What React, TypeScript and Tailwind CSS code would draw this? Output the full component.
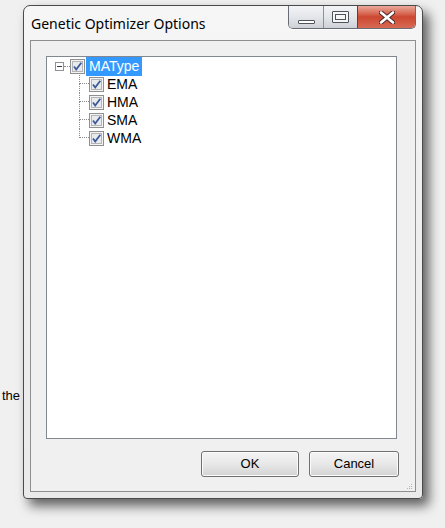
import React from 'react';

const CheckBox = () => (
  <svg width="15" height="15" viewBox="0 0 15 15" className="shrink-0">
    <rect x="0.5" y="0.5" width="14" height="14" fill="#f4f4f4" stroke="#8e8f8f" />
    <rect x="2.5" y="2.5" width="10" height="10" fill="#e9eaec" stroke="#b2b4b8" />
    <path d="M4 7.5 L6.2 10.5 L11.3 3.8" fill="none" stroke="#3c5a9a" strokeWidth="1.8" />
  </svg>
);

const Expander = () => (
  <div className="w-[9px] h-[9px] border border-[#919191] bg-white flex items-center justify-center shrink-0">
    <div className="w-[5px] h-px bg-[#333a4e]" />
  </div>
);

const TreeChild = ({ label, last }: { label: string; last: boolean }) => (
  <div className="flex h-[18px] items-center">
    <div className="w-[32px] shrink-0" />
    <div className="w-[10px] h-full flex flex-col shrink-0">
      <div className="h-[9px] border-l border-b border-dotted border-[#8a8a8a]" />
      <div className={`flex-1 ${last ? '' : 'border-l border-dotted border-[#8a8a8a]'}`} />
    </div>
    <CheckBox />
    <span className="ml-[3px] text-[14px] leading-[18px] text-black">{label}</span>
  </div>
);

const App = () => {
  const children = ['EMA', 'HMA', 'SMA', 'WMA'];
  const btn =
    'h-[26px] border border-[#707070] rounded-[3px] bg-gradient-to-b from-[#f4f4f4] via-[#e8e8e8] via-50% to-[#d3d3d3] text-[13px] text-black shadow-[inset_0_0_0_1px_#fbfbfb]';

  return (
    <div
      className="relative w-[445px] h-[528px] bg-[#f0f0f0] pt-[5px] pl-[23px] overflow-hidden"
      style={{ fontFamily: '"Liberation Sans", Arial, sans-serif' }}
    >
      {/* text of the app underneath the dialog */}
      <span className="absolute left-[2px] top-[388px] text-[13px] leading-[16px] text-black">the</span>

      {/* dialog window */}
      <div className="relative w-[400px] h-[494px] border border-[#4a4a4a] rounded-t-[7px] rounded-b-[4px] bg-gradient-to-b from-[#f6f6f6] via-[#eeeeee] to-[#eaeaea] shadow-[6px_7px_12px_rgba(0,0,0,0.6)] flex flex-col">
        {/* title bar */}
        <div className="h-[34px] flex items-start pl-[7px] pr-[6px] shrink-0">
          <span
            className="mt-[8px] text-[14px] leading-[20px] text-black flex-1"
            style={{ fontFamily: '"Noto Sans", "Open Sans", sans-serif' }}
          >
            Genetic Optimizer Options
          </span>
          <div className="flex h-[23px] border-x border-b border-[#686c74] rounded-b-[5px] overflow-hidden shadow-[0_1px_0_#ffffff]">
            <div className="w-[35px] h-full bg-gradient-to-b from-[#f3f4f6] via-[#e4e6ea] to-[#cdd1d7] border-r border-[#8d9199] flex items-end justify-center pb-[4px]">
              <div className="w-[17px] h-[4px] bg-white border border-[#4e535c] rounded-[1px]" />
            </div>
            <div className="w-[34px] h-full bg-gradient-to-b from-[#f3f4f6] via-[#e4e6ea] to-[#cdd1d7] border-r border-[#6b3a33] flex items-center justify-center">
              <div className="w-[17px] h-[12px] border border-[#4e535c] bg-[#f6f6f6] flex items-center justify-center rounded-[1px]">
                <div className="w-[11px] h-[6px] border border-[#4e535c]" />
              </div>
            </div>
            <div className="w-[57px] h-full bg-gradient-to-b from-[#e9a99c] via-[#cc4630] to-[#d86a55] flex items-center justify-center">
              <svg width="16" height="13" viewBox="0 0 16 13">
                <path d="M2 1.5 L14 11.5 M14 1.5 L2 11.5" stroke="#4c2a26" strokeWidth="4.6" strokeLinecap="round" />
                <path d="M2 1.5 L14 11.5 M14 1.5 L2 11.5" stroke="#ffffff" strokeWidth="2.6" strokeLinecap="round" />
              </svg>
            </div>
          </div>
        </div>

        {/* client area */}
        <div className="mx-[6px] mb-[6px] h-[452px] border border-[#8e8f8f] bg-[#f0f0f0] flex flex-col pt-[15px] pl-[15px] pr-[16px]">
          <div className="w-[351px] h-[383px] border border-[#828790] bg-white flex flex-col">
            <div className="flex h-[18px] items-center pl-[8px]">
              <Expander />
              <div className="w-[6px] border-t border-dotted border-[#8a8a8a]" />
              <CheckBox />
              <span className="ml-px px-[3px] bg-[#3399ff] text-white text-[14px] leading-[19px]">MAType</span>
            </div>
            {children.map((c, i) => (
              <TreeChild key={c} label={c} last={i === children.length - 1} />
            ))}
          </div>

          <div className="flex justify-end gap-[10px] mt-[12px]">
            <button className={`w-[98px] ${btn}`}>OK</button>
            <button className={`w-[90px] ${btn}`}>Cancel</button>
          </div>

          <div className="flex justify-end mt-auto mb-[1px] -mr-[14px]">
            <svg width="6" height="6" viewBox="0 0 6 6">
              <rect x="4" y="0" width="1" height="1" fill="#b5b5b5" />
              <rect x="2" y="2" width="1" height="1" fill="#b5b5b5" />
              <rect x="4" y="2" width="1" height="1" fill="#b5b5b5" />
              <rect x="0" y="4" width="1" height="1" fill="#b5b5b5" />
              <rect x="2" y="4" width="1" height="1" fill="#b5b5b5" />
              <rect x="4" y="4" width="1" height="1" fill="#b5b5b5" />
            </svg>
          </div>
        </div>
      </div>
    </div>
  );
};

export default App;
